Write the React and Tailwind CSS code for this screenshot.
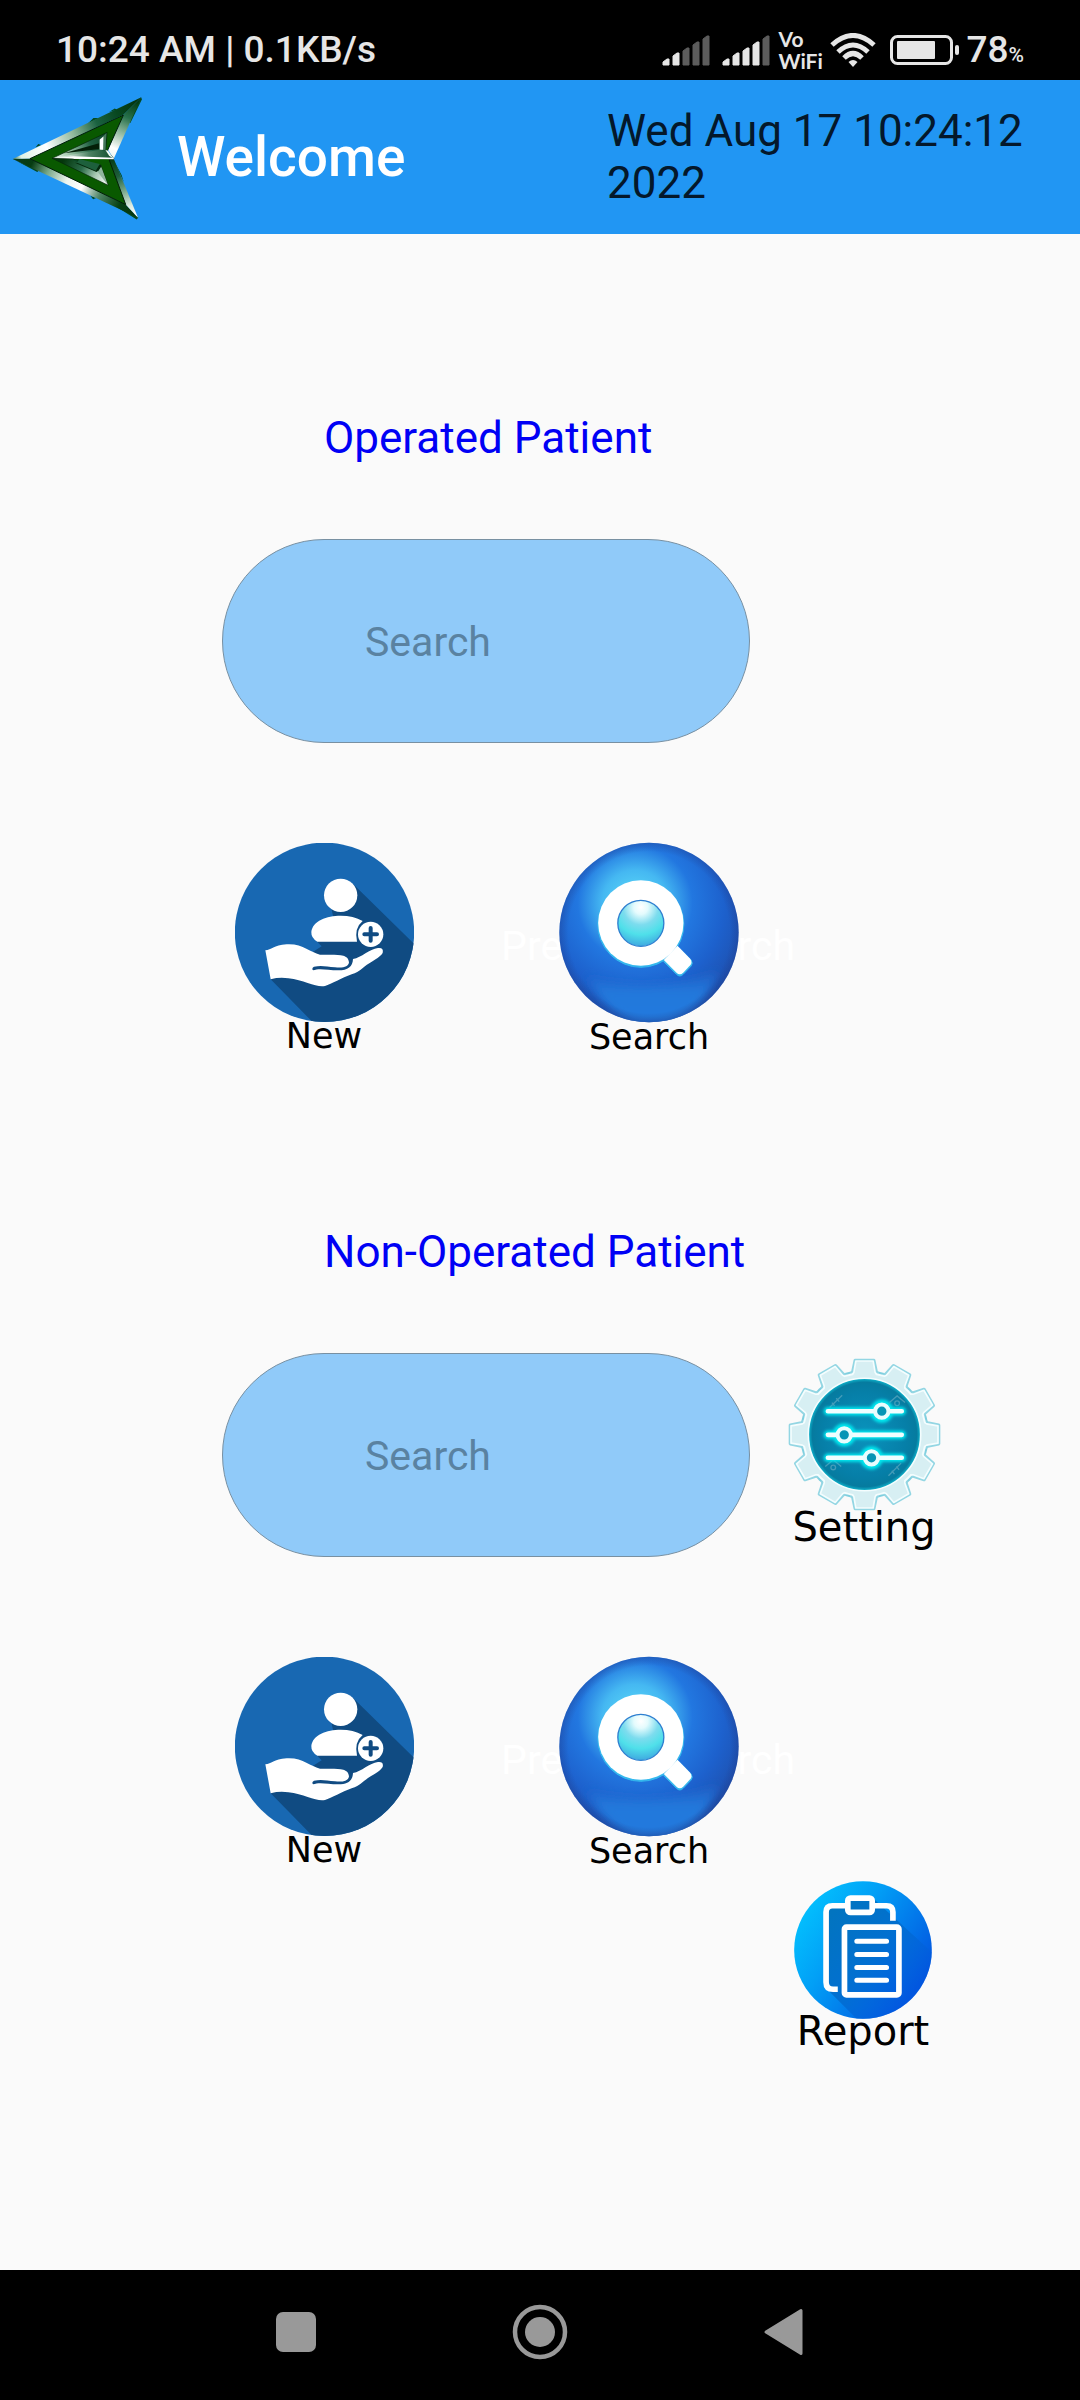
import React from "react";

function Signal({ active }) {
  const tops = [23, 17, 12, 6, 0];
  return (
    <svg viewBox="0 0 48 31" className="h-[31px] w-12" aria-hidden="true">
      {tops.map((t, i) => (
        <path
          key={t}
          fill={i < active ? "#e6e6e6" : "#5c5c5c"}
          stroke={i < active ? "#e6e6e6" : "#5c5c5c"}
          strokeLinejoin="round"
          d={`M${i * 10 + 1} ${t + 4} L${i * 10 + 5} ${t + 1} H${i * 10 + 7} V30 H${i * 10 + 1} Z`}
        />
      ))}
    </svg>
  );
}

function StatusBar() {
  return (
    <div className="flex h-20 items-end justify-between bg-black pr-14 pb-2 pl-14 text-[#e6e6e6]">
      <div className="text-[37px] leading-[44px] font-medium whitespace-nowrap">10:24 AM | 0.1KB/s</div>
      <div className="flex items-center">
        <Signal active={2} />
        <span className="w-3" />
        <Signal active={4} />
        <div className="ml-2 w-[42px] font-['Lato'] text-[21px] leading-[22px] font-bold">
          <div>Vo</div>
          <div>WiFi</div>
        </div>
        <svg viewBox="0 0 46 34" className="ml-2.5 h-[34px] w-[46px]" fill="none" stroke="#e6e6e6" aria-hidden="true">
          <path d="M2 12 Q23 -7 44 12" strokeWidth="5" />
          <path d="M8 19 Q23 5 38 19" strokeWidth="5" />
          <path d="M14 25 Q23 16 32 25" strokeWidth="5" />
          <path d="M18.500 29 Q23 25 27.500 29 L23 34 Z" fill="#e6e6e6" stroke="none" />
        </svg>
        <svg viewBox="0 0 70 30" className="ml-3.5 h-[30px] w-[70px]" aria-hidden="true">
          <rect x="1.500" y="1.500" width="60" height="27" rx="6" fill="none" stroke="#e6e6e6" strokeWidth="3" />
          <rect x="7" y="6" width="38" height="18" rx="1" fill="#e6e6e6" />
          <rect x="65" y="10" width="4" height="10" rx="2" fill="#e6e6e6" />
        </svg>
        <div className="ml-1.5 flex items-baseline font-medium">
          <span className="text-[37px] leading-[44px]">78</span>
          <span className="text-[21px]">%</span>
        </div>
      </div>
    </div>
  );
}

function Logo() {
  return (
    <svg viewBox="30 40 400 390" className="h-[130px] w-[133px]" role="img" aria-label="Back">
      <defs>
        <linearGradient id="lgTop" gradientUnits="userSpaceOnUse" x1="38" y1="241" x2="425" y2="55">
          <stop offset="0" stopColor="#2d6b45" />
          <stop offset="0.060" stopColor="#dff2e6" />
          <stop offset="0.250" stopColor="#ffffff" />
          <stop offset="0.460" stopColor="#8fb89b" />
          <stop offset="0.640" stopColor="#1b6240" />
          <stop offset="0.800" stopColor="#07471f" />
          <stop offset="1" stopColor="#033008" />
        </linearGradient>
        <linearGradient id="lgRight" gradientUnits="userSpaceOnUse" x1="415" y1="70" x2="335" y2="235">
          <stop offset="0" stopColor="#033a12" />
          <stop offset="0.300" stopColor="#27704a" />
          <stop offset="0.600" stopColor="#9cc0a8" />
          <stop offset="0.850" stopColor="#ffffff" />
          <stop offset="1" stopColor="#eef6f0" />
        </linearGradient>
        <linearGradient id="lgBottom" gradientUnits="userSpaceOnUse" x1="38" y1="241" x2="415" y2="418">
          <stop offset="0" stopColor="#0b3a1b" />
          <stop offset="0.140" stopColor="#063c12" />
          <stop offset="0.270" stopColor="#79a889" />
          <stop offset="0.420" stopColor="#eef5ef" />
          <stop offset="0.540" stopColor="#ffffff" />
          <stop offset="0.680" stopColor="#4f8465" />
          <stop offset="0.840" stopColor="#064014" />
          <stop offset="1" stopColor="#063410" />
        </linearGradient>
        <linearGradient id="lgLower" gradientUnits="userSpaceOnUse" x1="335" y1="240" x2="410" y2="415">
          <stop offset="0" stopColor="#063c16" />
          <stop offset="0.300" stopColor="#1e5f3b" />
          <stop offset="0.550" stopColor="#7aa88c" />
          <stop offset="0.800" stopColor="#dcebe0" />
          <stop offset="1" stopColor="#ffffff" />
        </linearGradient>
        <linearGradient id="lgInner" gradientUnits="userSpaceOnUse" x1="157" y1="239" x2="322" y2="180">
          <stop offset="0" stopColor="#f4fff6" />
          <stop offset="0.350" stopColor="#8fba9b" />
          <stop offset="0.700" stopColor="#1f6042" />
          <stop offset="1" stopColor="#0b4527" />
        </linearGradient>
        <linearGradient id="lgMid" gradientUnits="userSpaceOnUse" x1="157" y1="239" x2="342" y2="230">
          <stop offset="0" stopColor="#ffffff" />
          <stop offset="0.300" stopColor="#c3dccb" />
          <stop offset="0.600" stopColor="#4d8263" />
          <stop offset="1" stopColor="#0f4c2b" />
        </linearGradient>
        <linearGradient id="lgInner2" gradientUnits="userSpaceOnUse" x1="190" y1="245" x2="322" y2="320">
          <stop offset="0" stopColor="#04360c" />
          <stop offset="0.400" stopColor="#2a6a48" />
          <stop offset="0.700" stopColor="#a7c8b1" />
          <stop offset="1" stopColor="#ffffff" />
        </linearGradient>
      </defs>
      <path d="M107 206 L115 196 L124 199 Z M264 134 L281 118 L298 118 Z M328 100 L345 89 L352 93 Z M424 55 L427 61 L392 133 L386 130 Z M50 247 L112 280 L118 275 Z M272 352 L280 362 L289 358 Z M352 386 L411 423 L416 417 L360 378 Z M342 245 L366 290 L372 310 Z" fill="#034a20" />
      <path d="M38 241 L425 55 L372 107 L90 240 Z" fill="url(#lgTop)" />
      <path d="M425 55 L372 107 L325 213 L342 240 Z" fill="url(#lgRight)" />
      <path d="M38 241 L90 240 L378 378 L415 418 Z" fill="url(#lgBottom)" />
      <path d="M342 240 L326 243 L378 378 L415 418 Z" fill="url(#lgLower)" />
      <path d="M90 240 L371 109 L322 218 L342 240 L328 243 L378 378 Z" fill="#095900" stroke="#031d05" strokeWidth="3" />
      <path d="M157 239 L322 161 L318 213 L342 240 Z" fill="url(#lgInner)" stroke="#032208" strokeWidth="2" />
      <path d="M192 224 L298 194 L299 211 Z" fill="#031f08" />
      <path d="M299 183 L320 163 L317 215 L299 213 Z" fill="#46775a" />
      <path d="M300 182 L311 173 L310 213 L300 213 Z" fill="#fff" />
      <path d="M157 239 L300 213 L318 217 L342 240 Z" fill="url(#lgMid)" />
      <path d="M157 240 L220 233 L342 237 L342 242 Z" fill="#fff" />
      <path d="M317 214 L325 216 L342 240 L328 231 Z" fill="#f2faf4" />
      <path d="M157 239 L218 241 L304 263 L325 320 Z" fill="url(#lgInner2)" stroke="#032208" strokeWidth="2" />
      <path d="M215 242 L298 263 L302 278 L288 278 Z" fill="#0c4727" />
      <path d="M225 252 L290 280 L306 266 L304 258 Z" fill="#04280b" />
      <path d="M238 241 L300 256 L288 276 L232 252 Z" fill="#1d603c" />
      <path d="M304 264 L324 319 L294 280 Z" fill="#8fb59c" />
    </svg>
  );
}

function NewPatientIcon() {
  return (
    <svg viewBox="75 70 537 537" className="h-[179px] w-[179px]" aria-hidden="true">
      <defs>
        <clipPath id="npClip">
          <circle cx="343.500" cy="338" r="269" />
        </clipPath>
      </defs>
      <circle cx="343.500" cy="338" r="269" fill="#1868b2" />
      <g clipPath="url(#npClip)">
        <path d="M430 194 L640 400 L640 640 L340 640 L182 479 L335 380 L320 365 L380 340 L365 270 Z" fill="#104b82" />
      </g>
      <g fill="#fff">
        <circle cx="392" cy="227" r="50" />
        <path d="M322 366 Q303 355 304 337 C308 303 350 288 392 288 Q430 288 458 304 Q432 325 441 366 Z" />
        <circle cx="482" cy="344" r="38" />
        <path d="M166 392 C185 391 190 377 230 374 C278 371 300 398 330 405 C365 405 385 404 400 408 C412 412 416 418 417 428 C416 441 400 446 375 443 C350 441 335 436 312 441 Q304 446 309 452 C330 444 352 452 385 452 C414 452 428 441 429 418 C455 414 478 388 504 385 Q522 383 518 400 C510 414 485 424 462 442 Q443 459 425 464 C395 475 365 493 345 499 C320 505 285 482 235 476 Q208 472 182 479 Z" />
      </g>
      <path d="M482 325 V363 M463 344 H501" stroke="#104b82" strokeWidth="12" strokeLinecap="round" />
    </svg>
  );
}

function SearchBallIcon() {
  return (
    <svg viewBox="237 67 539 543" className="relative h-[181px] w-[180px]" aria-hidden="true">
      <defs>
        <radialGradient id="sbBall" gradientUnits="userSpaceOnUse" cx="465" cy="250" r="410">
          <stop offset="0" stopColor="#5fe0f8" />
          <stop offset="0.240" stopColor="#45b8f2" />
          <stop offset="0.420" stopColor="#2277e0" />
          <stop offset="0.650" stopColor="#1d61cd" />
          <stop offset="0.850" stopColor="#1e52b2" />
          <stop offset="1" stopColor="#254594" />
        </radialGradient>
        <linearGradient id="sbGlow" x1="0" y1="0" x2="0" y2="1">
          <stop offset="0" stopColor="#2068cf" stopOpacity="0.600" />
          <stop offset="0.400" stopColor="#2379dc" />
          <stop offset="1" stopColor="#237ade" />
        </linearGradient>
        <radialGradient id="sbLens" cx="0.500" cy="0.150" r="0.850">
          <stop offset="0" stopColor="#ffffff" />
          <stop offset="0.180" stopColor="#e4fbfd" />
          <stop offset="0.450" stopColor="#7ddcee" />
          <stop offset="0.700" stopColor="#4fe0ea" />
          <stop offset="1" stopColor="#3fa9e0" />
        </radialGradient>
        <radialGradient id="sbEdge" cx="0.500" cy="0.500" r="0.500">
          <stop offset="0.900" stopColor="#203a88" stopOpacity="0" />
          <stop offset="1" stopColor="#203a88" stopOpacity="0.350" />
        </radialGradient>
        <filter id="sbSoft" x="-10%" y="-20%" width="120%" height="140%">
          <feGaussianBlur stdDeviation="12" />
        </filter>
        <clipPath id="sbClip">
          <circle cx="506.500" cy="338.500" r="269" />
        </clipPath>
      </defs>
      <circle cx="506.500" cy="338.500" r="269" fill="url(#sbBall)" />
      <g clipPath="url(#sbClip)">
        <path d="M320 470 Q510 525 715 455 Q670 580 560 615 H470 Q380 585 320 470 Z" fill="url(#sbGlow)" filter="url(#sbSoft)" />
      </g>
      <circle cx="506.500" cy="338.500" r="269" fill="url(#sbEdge)" />
      <g fill="#35b9ee" stroke="#35b9ee" strokeWidth="3">
        <circle cx="482" cy="314" r="129" />
        <path d="M551 426 L589 464 Q599 474 609 464 L632 440 Q640 432 633 421 L594 382 Z" />
      </g>
      <g fill="#fff">
        <circle cx="482" cy="310" r="128" />
        <path d="M551 421 L589 459 Q599 468 609 459 L630 437 Q638 428 630 417 L592 378 Z" />
      </g>
      <circle cx="482" cy="311" r="69" fill="url(#sbLens)" stroke="#2f7fd0" strokeWidth="4" />
    </svg>
  );
}

const TEETH = [0, 30, 60, 90, 120, 150, 180, 210, 240, 270, 300, 330];

function SettingIcon() {
  return (
    <svg viewBox="80 86 460 460" className="h-[153px] w-[153px]" aria-hidden="true">
      <defs>
        <radialGradient id="stDisc">
          <stop offset="0" stopColor="#0a93bd" />
          <stop offset="0.750" stopColor="#067fa8" />
          <stop offset="0.930" stopColor="#067b9f" />
          <stop offset="1" stopColor="#0fb8cf" />
        </radialGradient>
        <filter id="stGlow" x="-20%" y="-40%" width="140%" height="180%">
          <feGaussianBlur stdDeviation="5" />
        </filter>
      </defs>
      <circle cx="310" cy="316" r="194" fill="#7fcfdf" />
      <g stroke="#93d6e3" strokeWidth="10" strokeLinejoin="round">
        {TEETH.map((a) => (
          <path key={a} transform={`rotate(${a} 310 316)`} fill="#93d6e3" d="M266 142 L275 126 L282 93 H338 L345 126 L354 142 Z" />
        ))}
      </g>
      <circle cx="310" cy="316" r="188" fill="#f4fdfe" />
      {TEETH.map((a) => (
        <path key={a} transform={`rotate(${a} 310 316)`} fill="#d7eff3" stroke="#f4fdfe" strokeWidth="5" strokeLinejoin="round" d="M269 144 L278 129 L284 95 H336 L342 129 L351 144 Z" />
      ))}
      <circle cx="310" cy="316" r="182" fill="#d7eff3" />
      <circle cx="310" cy="316" r="169" fill="url(#stDisc)" stroke="#f4fdfe" strokeWidth="5" />
      <g stroke="#7fb9cb" strokeOpacity="0.500" strokeWidth="4" fill="none">
        <path d="M205 235 L243 198 M212 220 L220 230 M225 207 L234 217 M382 440 L420 402 M392 425 L400 435 M406 412 L414 422" />
        <path d="M385 220 L408 200 L432 220 M192 412 L216 392 L240 412" />
        <circle cx="408" cy="222" r="7" />
        <circle cx="216" cy="415" r="7" />
      </g>
      <g filter="url(#stGlow)" stroke="#00e6ee" fill="none" strokeLinecap="round" strokeWidth="26">
        <path d="M200 246 H422 M200 317 H422 M200 386 H422" />
        <circle cx="362" cy="246" r="22" />
        <circle cx="249" cy="317" r="22" />
        <circle cx="331" cy="386" r="22" />
      </g>
      <g stroke="#f0feff" strokeLinecap="round" strokeWidth="14">
        <path d="M200 246 H422 M200 317 H422 M200 386 H422" />
      </g>
      <g stroke="#e9fdfe" strokeWidth="12" fill="#0795b5">
        <circle cx="362" cy="246" r="20" />
        <circle cx="249" cy="317" r="20" />
        <circle cx="331" cy="386" r="20" />
      </g>
    </svg>
  );
}

function ReportIcon() {
  return (
    <svg viewBox="103 63 413 413" className="h-[138px] w-[138px]" aria-hidden="true">
      <defs>
        <linearGradient id="rpDisc" x1="0.100" y1="0.200" x2="0.900" y2="0.750">
          <stop offset="0" stopColor="#03bdfd" />
          <stop offset="0.350" stopColor="#029ff6" />
          <stop offset="1" stopColor="#0256e0" />
        </linearGradient>
        <linearGradient id="rpShade" gradientUnits="userSpaceOnUse" x1="200" y1="180" x2="460" y2="400">
          <stop offset="0" stopColor="#0274c0" />
          <stop offset="0.500" stopColor="#0270d0" />
          <stop offset="1" stopColor="#0258de" stopOpacity="0.400" />
        </linearGradient>
        <clipPath id="rpClip">
          <circle cx="309.500" cy="269.500" r="206" />
        </clipPath>
      </defs>
      <circle cx="309.500" cy="269.500" r="206" fill="url(#rpDisc)" />
      <path d="M205 135 H260 V115 H340 L520 280 V480 H295 L200 385 Z" fill="url(#rpShade)" clipPath="url(#rpClip)" />
      <g fill="none" stroke="#fff" strokeWidth="17" strokeLinejoin="round">
        <path d="M262 137 H218 Q199 137 199 156 V366 Q199 387 220 387 H234" />
        <path d="M340 137 H380 Q399 137 399 156 V182" />
        <rect x="264" y="114" width="73" height="43" rx="8" />
        <rect x="254" y="201" width="163" height="203" rx="6" />
      </g>
      <path d="M291 243 H380 M291 283 H380 M291 322 H380 M291 360 H380" stroke="#fff" strokeWidth="15" strokeLinecap="round" />
    </svg>
  );
}

function PatientSection({ id, title, children }) {
  return (
    <section className="grid grid-cols-10" aria-labelledby={id}>
      <h2 id={id} className="col-span-7 col-start-4 text-[44px] leading-[52px] text-[#0000f5]">
        {title}
      </h2>
      <div className="col-span-5 col-start-3 mt-[75px] px-1.5">
        <input
          type="text"
          aria-label={`Search ${title}`}
          placeholder="Search"
          className="h-[204px] w-full rounded-full border border-[#7890a2] bg-[#90caf9] px-[142px] pt-0.5 text-[41px] text-[#001c30] placeholder:text-[#5a82a1] placeholder:opacity-100"
        />
      </div>
      {children}
      <button type="button" className="col-span-2 col-start-3 mt-[100px] flex flex-col items-center font-['DejaVu_Sans'] text-[35px] leading-7 text-black">
        <NewPatientIcon />
        New
      </button>
      <button type="button" className="relative col-span-2 col-start-6 mt-[99px] flex flex-col items-center pl-0.5 font-['DejaVu_Sans'] text-[35px] leading-7 text-black">
        <span className="absolute inset-x-0 top-20 flex justify-center font-['Roboto'] text-[41px] leading-[48px] whitespace-nowrap text-white">
          Previous Search
        </span>
        <SearchBallIcon />
        Search
      </button>
    </section>
  );
}

export default function App() {
  return (
    <div className="flex min-h-screen flex-col bg-[#fafafa] font-['Roboto',sans-serif]">
      <StatusBar />
      <header className="flex h-[154px] items-center justify-between bg-[#2196f3] pl-2.5">
        <div className="flex items-center gap-[34px]">
          <button type="button">
            <Logo />
          </button>
          <h1 className="text-[55px] leading-[64px] font-medium text-white">Welcome</h1>
        </div>
        <p className="w-[473px] text-[44px] leading-[52px] text-[#04182b]">Wed Aug 17 10:24:12 2022</p>
      </header>
      <main className="flex flex-1 flex-col pt-[178px]">
        <PatientSection id="operated" title="Operated Patient" />
        <div className="h-[175px]" />
        <PatientSection id="non-operated" title="Non-Operated Patient">
          <button type="button" className="col-span-2 col-start-8 mt-20 flex flex-col items-center self-start font-['DejaVu_Sans'] text-[40px] leading-8 text-black">
            <SettingIcon />
            Setting
          </button>
        </PatientSection>
        <div className="mt-4 grid grid-cols-10">
          <button type="button" className="col-span-2 col-start-8 flex flex-col items-center pr-0.5 font-['DejaVu_Sans'] text-[40px] leading-6 text-black">
            <ReportIcon />
            Report
          </button>
        </div>
      </main>
      <nav className="flex h-[130px] items-center justify-center gap-[188px] bg-black pb-1.5" aria-label="System">
        <button type="button" aria-label="Recent apps">
          <svg viewBox="0 0 56 56" className="h-14 w-14" fill="#999">
            <rect x="8" y="8" width="40" height="40" rx="7" />
          </svg>
        </button>
        <button type="button" aria-label="Home">
          <svg viewBox="0 0 56 56" className="h-14 w-14">
            <circle cx="28" cy="28" r="25" fill="none" stroke="#999" strokeWidth="4.500" />
            <circle cx="28" cy="28" r="15" fill="#999" />
          </svg>
        </button>
        <button type="button" aria-label="Back">
          <svg viewBox="0 0 56 56" className="h-14 w-14" fill="#999" stroke="#999" strokeWidth="3" strokeLinejoin="round">
            <path d="M10 28 L45 6.500 V49.500 Z" />
          </svg>
        </button>
      </nav>
    </div>
  );
}
